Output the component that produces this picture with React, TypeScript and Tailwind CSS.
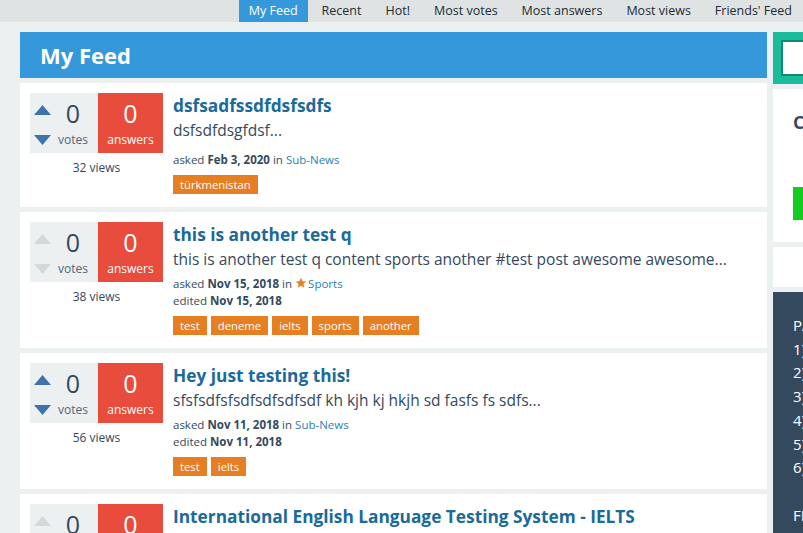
import React from 'react'

type Question = {
  title: string
  content: string
  asked: string
  edited?: string
  category: string
  starred?: boolean
  tags: string[]
  views: number
  canVote: boolean
  metaGap?: boolean
}

const questions: Question[] = [
  {
    title: 'dsfsadfssdfdsfsdfs',
    content: 'dsfsdfdsgfdsf...',
    asked: 'Feb 3, 2020',
    category: 'Sub-News',
    tags: ['türkmenistan'],
    views: 32,
    canVote: true,
    metaGap: true,
  },
  {
    title: 'this is another test q',
    content: 'this is another test q content sports another #test post awesome awesome...',
    asked: 'Nov 15, 2018',
    edited: 'Nov 15, 2018',
    category: 'Sports',
    starred: true,
    tags: ['test', 'deneme', 'ielts', 'sports', 'another'],
    views: 38,
    canVote: false,
  },
  {
    title: 'Hey just testing this!',
    content: 'sfsfsdfsfsdfsdfsdfsdf kh kjh kj hkjh sd fasfs fs sdfs...',
    asked: 'Nov 11, 2018',
    edited: 'Nov 11, 2018',
    category: 'Sub-News',
    tags: ['test', 'ielts'],
    views: 56,
    canVote: true,
  },
  {
    title: 'International English Language Testing System - IELTS',
    content: 'The International English Language Testing System is an international standardized test...',
    asked: 'Nov 10, 2018',
    category: 'Education',
    tags: ['ielts', 'english'],
    views: 71,
    canVote: false,
  },
]

const navItems = ['My Feed', 'Recent', 'Hot!', 'Most votes', 'Most answers', 'Most views', "Friends' Feed"]

function Arrow({ up, active }: { up: boolean; active: boolean }) {
  return (
    <svg width="17" height="10" viewBox="0 0 17 10" className="block">
      <polygon
        points={up ? '0,10 8.5,0 17,10' : '0,0 8.5,10 17,0'}
        fill={active ? '#3d74ab' : '#d3d8d9'}
      />
    </svg>
  )
}

function Star() {
  return (
    <svg width="12" height="12" viewBox="0 0 24 24" className="mr-[1px] inline-block align-[-1px]">
      <polygon
        points="12,1.5 15.1,8.3 22.5,9 16.9,14 18.5,21.4 12,17.6 5.5,21.4 7.1,14 1.5,9 8.9,8.3"
        fill="#e67e22"
      />
    </svg>
  )
}

function QuestionItem({ q }: { q: Question }) {
  return (
    <div className="mt-[5px] flex bg-white px-[10px] pt-[10px] pb-[13px]">
      {/* vote + answer counters */}
      <div className="w-[133px] shrink-0">
        <div className="flex h-[60px]">
          <div className="relative flex w-[68px] flex-col items-center bg-[#ecf0f1] pl-[18px] text-[#34495e]">
            <div className="absolute top-[12px] left-[4px] flex flex-col gap-[20px]">
              <Arrow up active={q.canVote} />
              <Arrow up={false} active={q.canVote} />
            </div>
            <span className="mt-[6px] text-[25px] leading-[28px]">0</span>
            <span className="mt-[6px] text-[12px] leading-[14px] text-[#52667a]">votes</span>
          </div>
          <div className="flex w-[65px] flex-col items-center bg-[#e74c3c] text-white">
            <span className="mt-[6px] text-[25px] leading-[28px]">0</span>
            <span className="mt-[6px] text-[12px] leading-[14px]">answers</span>
          </div>
        </div>
        <div className="mt-[6px] text-center text-[12px] leading-[18px] text-[#34495e]">
          {q.views} views
        </div>
      </div>

      {/* question body */}
      <div className="ml-[10px] min-w-0 flex-1">
        <a className="block text-[17.3px] leading-[26px] font-bold text-[#1a6a9b]">{q.title}</a>
        <div className="text-[15.5px] leading-[22px] text-[#34495e]">{q.content}</div>
        <div className={`${q.metaGap ? 'mt-[10px]' : 'mt-[5px]'} text-[11.5px] leading-[17px] text-[#34495e]`}>
          <div>
            asked <b>{q.asked}</b> in{' '}
            <span className="text-[#2980b9]">
              {q.starred && <Star />}
              {q.category}
            </span>
          </div>
          {q.edited && (
            <div>
              edited <b>{q.edited}</b>
            </div>
          )}
        </div>
        <div className="mt-[7px] flex gap-[4px]">
          {q.tags.map((t) => (
            <span key={t} className="h-[19px] bg-[#e67e22] px-[7px] text-[11.3px] leading-[19px] text-white">
              {t}
            </span>
          ))}
        </div>
      </div>
    </div>
  )
}

export default function App() {
  return (
    <div
      className="min-h-screen overflow-hidden bg-[#ecf0f1]"
      style={{ fontFamily: '"Open Sans", "Noto Sans", sans-serif' }}
    >
      <div className="flex h-[22px] justify-end bg-[#dfe3e4]">
        <nav className="mr-[1px] flex gap-[4px]">
          {navItems.map((n, i) => (
            <a
              key={n}
              className={`px-[10px] text-[12.5px] leading-[22px] ${
                i === 0 ? 'bg-[#3498db] text-white' : 'text-[#222b33]'
              }`}
            >
              {n}
            </a>
          ))}
        </nav>
      </div>

      <div className="flex w-[1100px] gap-[6px] pt-[10px] pl-[20px]">
        <main className="w-[747px] shrink-0">
          <div className="flex h-[46px] items-center bg-[#3498db] px-[20px]">
            <h1 className="text-[22px] font-bold text-white">My Feed</h1>
          </div>
          {questions.map((q) => (
            <QuestionItem key={q.title} q={q} />
          ))}
        </main>

        <aside className="flex w-[260px] shrink-0 flex-col gap-[5px]">
          <div className="bg-[#1abc9c] p-[8px]">
            <input
              className="h-[36px] w-full border-2 border-[#13876f] bg-white px-2 text-[14px] outline-none"
              placeholder=""
            />
          </div>
          <div className="h-[153px] bg-white px-[20px] pt-[20px]">
            <h2 className="text-[18px] leading-[26px] font-bold text-[#34495e]">Categories</h2>
            <button className="mt-[52px] h-[33px] w-full bg-[#12cc1f] text-[14px] text-white">
              Ask a Question
            </button>
          </div>
          <div className="h-[40px] bg-white" />
          <div className="bg-[#34495e] px-[20px] pt-[22px] pb-[20px] text-[15px] leading-[23.7px] text-white">
            <div>PAYLAŞIM KURALLARI</div>
            <div>1) Saygılı olun</div>
            <div>2) Spam yapmayın</div>
            <div>3) Konuya uygun yazın</div>
            <div>4) Etiket kullanın</div>
            <div>5) Kaynak belirtin</div>
            <div>6) Kurallara uyun</div>
            <div>&nbsp;</div>
            <div>FIKIRLERINIZ</div>
          </div>
        </aside>
      </div>
    </div>
  )
}
